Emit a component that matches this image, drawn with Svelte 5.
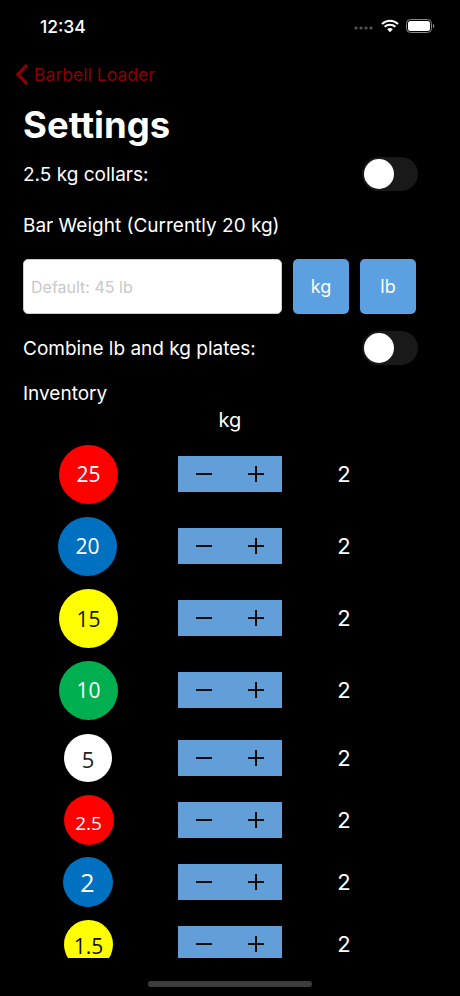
<script>
	const plates = [
		{ label: "25", size: 59, font: 21, bg: "#ff0000", fg: "#fff", dx: 0, dy: 0, height: 72 },
		{ label: "20", size: 59, font: 21, bg: "#0070c0", fg: "#fff", dx: -2, dy: 0, height: 72 },
		{ label: "15", size: 59, font: 21, bg: "#ffff00", fg: "#111", dx: 0, dy: 2, height: 72 },
		{ label: "10", size: 59, font: 21, bg: "#00b050", fg: "#fff", dx: 0, dy: 0, height: 72 },
		{ label: "5", size: 48, font: 22, bg: "#ffffff", fg: "#222", dx: -1, dy: 2, height: 63 },
		{ label: "2.5", size: 50, font: 19, bg: "#ff0000", fg: "#fff", dx: 0, dy: 7, height: 62 },
		{ label: "2", size: 50, font: 25, bg: "#0070c0", fg: "#fff", dx: -2, dy: 0, height: 62 },
		{ label: "1.5", size: 49, font: 21, bg: "#ffff00", fg: "#111", dx: 0, dy: 5, height: 62 },
	];
</script>

<div class="page">
	<div class="status">
		<span class="time">12:34</span>
		<div class="status-icons">
			<svg class="dots" width="20" height="4" viewBox="0 0 20 4">
				<circle cx="2" cy="2" r="1.6" />
				<circle cx="7" cy="2" r="1.6" />
				<circle cx="12" cy="2" r="1.6" />
				<circle cx="17" cy="2" r="1.6" />
			</svg>
			<svg width="18" height="14" viewBox="0 0 18 14">
				<path d="M1 5a11.5 11.5 0 0 1 16 0M3.6 7.8a7.8 7.8 0 0 1 10.8 0" fill="none" stroke="#fff" stroke-width="2" />
				<path d="M6.2 10.3a4 4 0 0 1 5.6 0L9 13.2z" fill="#fff" />
			</svg>
			<svg width="29" height="14" viewBox="0 0 29 14">
				<rect x="0.5" y="0.5" width="25" height="13" rx="4" fill="none" stroke="#8a8a8a" />
				<rect x="2" y="2" width="22" height="10" rx="2.5" fill="#fff" />
				<path d="M27 5v4a2 2 0 0 0 1.4-2A2 2 0 0 0 27 5z" fill="#8a8a8a" />
			</svg>
		</div>
	</div>

	<div class="nav">
		<svg width="14" height="23" viewBox="0 0 14 23">
			<path d="M12 2 3 11.5 12 21" fill="none" stroke="#8b0000" stroke-width="3.4" />
		</svg>
		<span>Barbell Loader</span>
	</div>

	<div class="content">
		<h1>Settings</h1>

		<div class="toggle-row first">
			<span>2.5 kg collars:</span>
			<div class="toggle"><div class="thumb"></div></div>
		</div>

		<div class="label bar-label">Bar Weight (Currently 20 kg)</div>

		<div class="bar-row">
			<input placeholder="Default: 45 lb" />
			<button>kg</button>
			<button>lb</button>
		</div>

		<div class="toggle-row second">
			<span>Combine lb and kg plates:</span>
			<div class="toggle"><div class="thumb"></div></div>
		</div>

		<div class="label inventory">Inventory</div>
	</div>

	<div class="unit">kg</div>

	<div class="plates">
		{#each plates as plate}
			<div class="plate-row" style="height: {plate.height}px">
				<div class="plate-cell">
					<div
						class="plate"
						style="width: {plate.size}px; height: {plate.size}px; background: {plate.bg}; color: {plate.fg}; font-size: {plate.font}px; margin-left: {plate.dx}px; padding-top: {plate.dy}px"
					>
						{plate.label}
					</div>
				</div>
				<div class="stepper">
					<span class="minus"></span>
					<span class="plus"></span>
				</div>
				<div class="count">2</div>
			</div>
		{/each}
	</div>

	<div class="home"></div>
</div>

<style>
	:global(body) {
		background: #000;
	}

	.page {
		width: 460px;
		height: 996px;
		background: #000;
		color: #fff;
		font-family: Inter, "Liberation Sans", sans-serif;
		overflow: hidden;
		position: relative;
	}

	.status {
		height: 52px;
		display: flex;
		justify-content: space-between;
		align-items: center;
		padding: 0 25px 0 40px;
		box-sizing: border-box;
	}

	.time {
		font-size: 17.5px;
		font-weight: 500;
	}

	.status-icons {
		display: flex;
		align-items: center;
		gap: 7px;
	}

	.dots {
		fill: #555;
		margin-top: 4px;
	}

	.nav {
		height: 44px;
		display: flex;
		align-items: center;
		gap: 5px;
		padding-left: 15px;
		color: #8b0000;
		font-size: 17.6px;
	}

	.content {
		padding: 0 42px 0 23px;
	}

	h1 {
		margin: 8px 0 0;
		font-size: 36.5px;
		line-height: 42px;
		font-weight: 700;
	}

	.toggle-row {
		display: flex;
		justify-content: space-between;
		align-items: center;
		font-size: 19px;
	}

	.first {
		margin-top: 11px;
	}

	.second {
		margin-top: 17px;
	}

	.toggle {
		width: 56px;
		height: 34px;
		border-radius: 17px;
		background: #191919;
		padding: 2px;
		box-sizing: border-box;
	}

	.thumb {
		width: 30px;
		height: 30px;
		border-radius: 50%;
		background: #fff;
	}

	.label {
		font-size: 19px;
		line-height: 24px;
	}

	.bar-label {
		margin-top: 23px;
	}

	.bar-row {
		display: flex;
		gap: 11px;
		margin-top: 21px;
	}

	input {
		width: 259px;
		height: 55px;
		box-sizing: border-box;
		border: 1px solid #ccc;
		border-radius: 5px;
		background: #fff;
		padding: 0 7px;
		font: inherit;
		font-size: 16px;
		margin: 0;
		outline: none;
	}

	input::placeholder {
		color: #c8c8c8;
		opacity: 1;
	}

	button {
		width: 56px;
		height: 55px;
		border: 0;
		border-radius: 5px;
		background: #5ba1e2;
		color: #fff;
		font: inherit;
		font-size: 18px;
		padding: 0;
	}

	.inventory {
		margin-top: 17px;
	}

	.unit {
		text-align: center;
		font-size: 20px;
		line-height: 24px;
		margin-top: 2px;
	}

	.plates {
		height: 520px;
		margin-top: 6px;
		overflow: hidden;
	}

	.plate-row {
		display: grid;
		grid-template-columns: 131px 104px 76px;
		column-gap: 24px;
		align-items: center;
		padding-left: 23px;
	}

	.plate-cell {
		display: flex;
		justify-content: center;
	}

	.plate {
		border-radius: 50%;
		display: flex;
		align-items: center;
		justify-content: center;
		font-family: "Open Sans", sans-serif;
		line-height: 1;
		box-sizing: border-box;
		flex: none;
	}

	.stepper {
		height: 36px;
		background: #629fd8;
		display: flex;
		align-items: center;
		justify-content: space-between;
		padding: 0 18px;
	}

	.minus,
	.plus {
		width: 16px;
		height: 16px;
		background: linear-gradient(#0c0c0c, #0c0c0c) center / 16px 2px no-repeat;
	}

	.plus {
		background:
			linear-gradient(#0c0c0c, #0c0c0c) center / 16px 2px no-repeat,
			linear-gradient(#0c0c0c, #0c0c0c) center / 2px 16px no-repeat;
	}

	.count {
		text-align: center;
		font-size: 22px;
	}

	.home {
		position: absolute;
		left: 148px;
		bottom: 9px;
		width: 164px;
		height: 6px;
		border-radius: 3px;
		background: #3c3c3c;
	}
</style>
